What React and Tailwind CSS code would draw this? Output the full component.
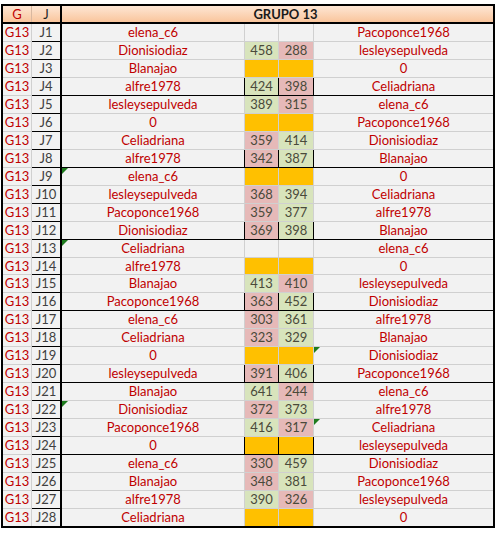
import React from "react";

const rows = [
  ["J1", "elena_c6", null, null, "Pacoponce1968", "e"],
  ["J2", "Dionisiodiaz", 458, 288, "lesleysepulveda"],
  ["J3", "Blanajao", null, null, "0", "o"],
  ["J4", "alfre1978", 424, 398, "Celiadriana"],
  ["J5", "lesleysepulveda", 389, 315, "elena_c6"],
  ["J6", "0", null, null, "Pacoponce1968", "o"],
  ["J7", "Celiadriana", 359, 414, "Dionisiodiaz"],
  ["J8", "alfre1978", 342, 387, "Blanajao"],
  ["J9", "elena_c6", null, null, "0", "o", "L"],
  ["J10", "lesleysepulveda", 368, 394, "Celiadriana"],
  ["J11", "Pacoponce1968", 359, 377, "alfre1978"],
  ["J12", "Dionisiodiaz", 369, 398, "Blanajao"],
  ["J13", "Celiadriana", null, null, "elena_c6", "e", "L"],
  ["J14", "alfre1978", null, null, "0", "o"],
  ["J15", "Blanajao", 413, 410, "lesleysepulveda"],
  ["J16", "Pacoponce1968", 363, 452, "Dionisiodiaz"],
  ["J17", "elena_c6", 303, 361, "alfre1978"],
  ["J18", "Celiadriana", 323, 329, "Blanajao"],
  ["J19", "0", null, null, "Dionisiodiaz", "o", "R"],
  ["J20", "lesleysepulveda", 391, 406, "Pacoponce1968"],
  ["J21", "Blanajao", 641, 244, "elena_c6"],
  ["J22", "Dionisiodiaz", 372, 373, "alfre1978", null, "L"],
  ["J23", "Pacoponce1968", 416, 317, "Celiadriana", null, "R"],
  ["J24", "0", null, null, "lesleysepulveda", "o"],
  ["J25", "elena_c6", 330, 459, "Dionisiodiaz"],
  ["J26", "Blanajao", 348, 381, "Pacoponce1968"],
  ["J27", "alfre1978", 390, 326, "lesleysepulveda"],
  ["J28", "Celiadriana", null, null, "0", "o"],
];

function Tri() {
  return (
    <svg className="absolute left-0 top-0" width="6" height="6" viewBox="0 0 6 6">
      <polygon points="0,0 6,0 0,6" fill="#1e7b1e" />
    </svg>
  );
}

function scoreBg(a, b, kind) {
  if (kind === "o") return ["bg-[#ffc000]", "bg-[#ffc000]"];
  if (kind === "e") return ["bg-[#f2f2f2]", "bg-[#f2f2f2]"];
  return a > b
    ? ["bg-[#d8e4bc]", "bg-[#e6b9b8]"]
    : ["bg-[#e6b9b8]", "bg-[#d8e4bc]"];
}

export default function App() {
  return (
    <div className="bg-white w-[498px] h-[534px] pt-[4px] pl-[1px]" style={{ fontFamily: "Lato, 'Liberation Sans', sans-serif" }}>
      <div className="w-[494px] border-2 border-black text-[13px] leading-none">
        {/* header */}
        <div className="flex h-[18px] border-b-2 border-black bg-gradient-to-b from-[#fde6d4] to-[#f9c59c]">
          <div className="w-[29px] border-r border-[#d9b8a0] flex items-center justify-center text-[#c00000]">G</div>
          <div className="w-[30px] border-r-2 border-black flex items-center justify-center text-[#262626]">J</div>
          <div className="flex-1 flex items-center justify-center font-bold text-[#1a1a1a] pl-[16px]">GRUPO 13</div>
        </div>
        {rows.map((r, i) => {
          const [j, n1, a, b, n2, kind, tri] = r;
          const last = i === rows.length - 1;
          const group = !last && i % 4 === 3;
          const bb = last ? "" : group ? "border-b border-black" : "border-b border-[#d0d0d0]";
          const gb = last ? "" : "border-b border-[#d0d0d0]";
          const h = i === 13 || i === 27 ? "h-[17px]" : "h-[18px]";
          const [c1, c2] = scoreBg(a, b, kind);
          return (
            <div key={j} className={`flex ${h}`}>
              <div className={`w-[29px] ${gb} border-r border-[#d0d0d0] bg-[#f2f2f2] flex items-center justify-center text-[#c00000]`}>G13</div>
              <div className={`w-[30px] ${gb} border-r-2 border-black bg-[#f2f2f2] flex items-center justify-center text-[#404040]`}>{j}</div>
              <div className={`relative w-[183px] ${bb} border-r border-[#d0d0d0] bg-[#f2f2f2] flex items-center justify-center text-[#c00000]`}>
                {tri === "L" && <Tri />}
                {n1}
              </div>
              <div className={`w-[34px] ${bb} border-r border-[#d0d0d0] ${c1} flex items-center justify-center text-[#4a4a3a]`}>{a}</div>
              <div className={`w-[35px] ${bb} border-r border-[#d0d0d0] ${c2} flex items-center justify-center text-[#4a4a3a]`}>{b}</div>
              <div className={`relative flex-1 ${bb} bg-[#f2f2f2] flex items-center justify-center text-[#c00000]`}>
                {tri === "R" && <Tri />}
                {n2}
              </div>
            </div>
          );
        })}
      </div>
    </div>
  );
}
